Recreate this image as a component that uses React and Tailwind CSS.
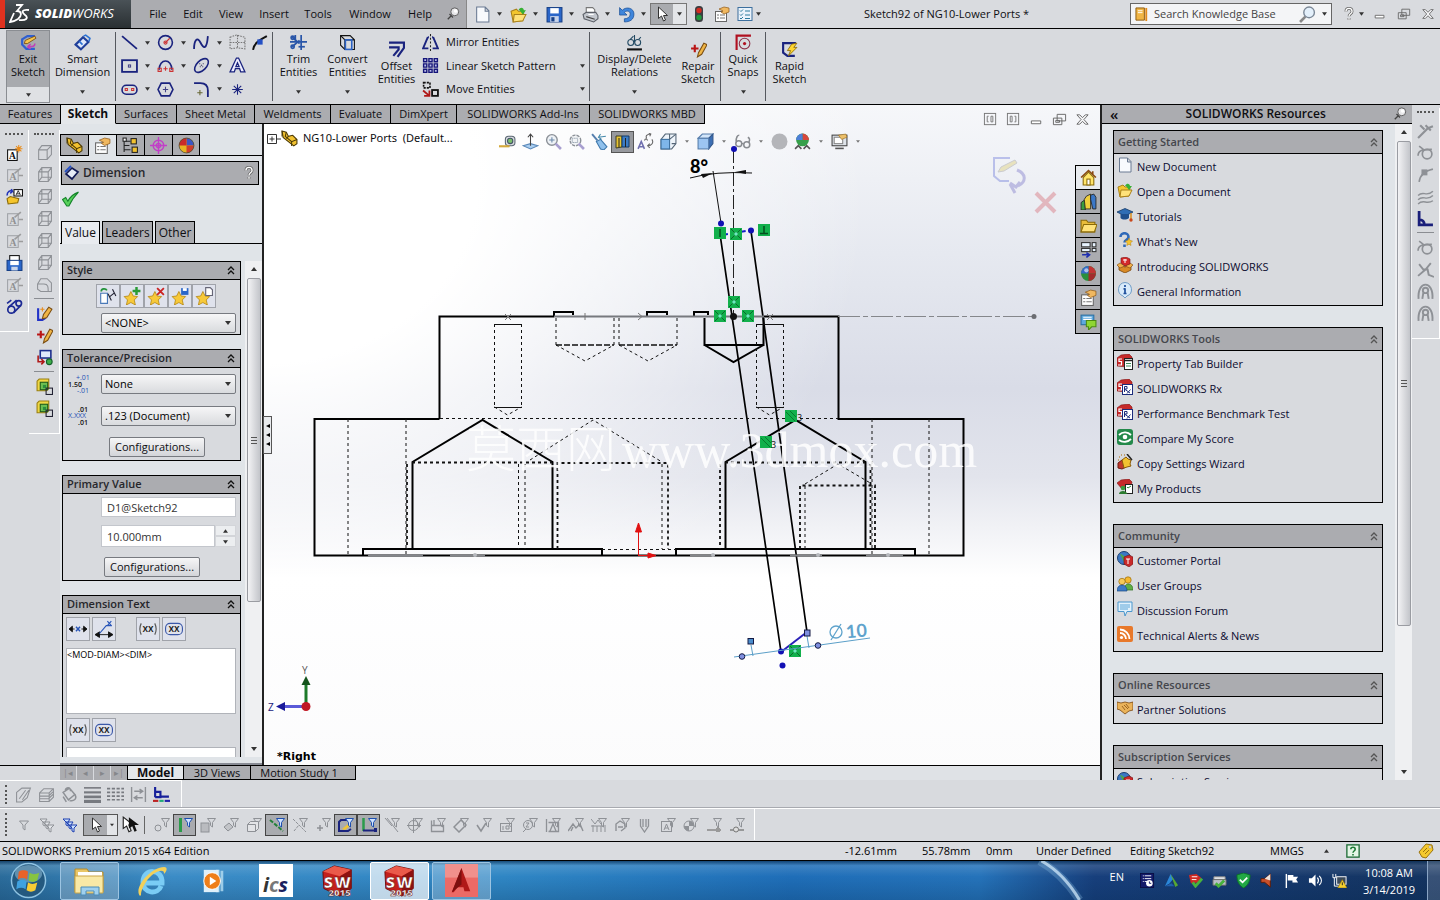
import React from 'react';

/* ---------- icon drawings, all on a 16 x 16 grid ---------- */
const G = '#8e9196';
const N = '#1a237e';
const funnel = (c, f = 'none') => <path d="M7.500 1.500h8l-3 4v4.500l-2-1.500v-3z" fill={f} stroke={c} />;
const cubeLines = (c) => <path d="M2.500 5.500h8v9h-8zM2.500 5.500l3-4h9v8.500l-4 4.500M10.500 5.500l4-4" fill="none" stroke={c} />;

const art = {
  pin: <g><circle cx="10" cy="5.500" r="4.500" fill="#e8e8ea" stroke="#555" /><circle cx="11" cy="4.500" r="2" fill="#fff" /><path d="M4 8l4 4M6 10l-4 4" stroke="#444" strokeWidth="1.500" /></g>,
  doc: <path d="M2.500 1h8l3.500 3.500V15h-11.500zM10.500 1v4H14" fill="#f8fafd" stroke="#6b7b93" />,
  open: <g><path d="M1 5l5-2 2 2h5l-1 9-9 1z" fill="#f3c62e" stroke="#a9801b" /><path d="M4 8h11l-3 6-9 1z" fill="#ffe27a" stroke="#a9801b" /><path d="M8 4c2-4 5-2 5 0h2l-3 4-3-4h2" fill="#37b134" /></g>,
  save: <g><rect x="1" y="1.500" width="14" height="13.500" fill="#2a66c9" stroke="#163f86" /><rect x="4" y="2" width="8" height="5" fill="#fff" /><rect x="4" y="9.500" width="8" height="5.500" fill="#c8d4ea" /><rect x="5" y="10.500" width="3" height="4" fill="#163f86" /></g>,
  print: <g><path d="M4 6V1.500h6l2 2V7" fill="#fff" stroke="#777" /><path d="M1 8l3-2h9l2 3v3l-4 3-9-3z" fill="#c3c7ce" stroke="#5c6068" /><path d="M4 10l8 2.500" stroke="#444" /><path d="M6 8h5" stroke="#fff" /></g>,
  undo: <path d="M1.500 1.500v7h7L6 6c2-2 5.500-1.500 5.500 1.500S9 12 6 12v3c5 0 9-2 9-7.500S8 0 4 4z" fill="#3f86dc" stroke="#1d4f96" strokeWidth=".7" />,
  cursor: <path d="M4.500 1v11.500l3-2.500 2 5 2-1-2-4.500h4z" fill="#fff" stroke="#333" />,
  light: <g><rect x="4" y="0" width="8" height="16" rx="3.500" fill="#3c3f42" /><circle cx="8" cy="4.500" r="2.700" fill="#d42b20" /><circle cx="8" cy="11.500" r="2.700" fill="#1f9b3d" /></g>,
  props: <g><rect x="1.500" y="5.500" width="11" height="10" fill="#fdfdfd" stroke="#666" /><path d="M3 9h2m1 0h5M3 12h2m1 0h5" stroke="#777" /><path d="M5 3l5-2 5 1v4l-5 2-3-2 2-1z" fill="#f0b860" stroke="#8f5a1a" strokeWidth=".7" /></g>,
  list: <g><rect x="1" y="1.500" width="14" height="13" fill="#eaf3fb" stroke="#3c6f9e" /><path d="M3 4.500l1 1 2-2M3 8.500l1 1 2-2M3 12l1 1 2-2M8 5h5M8 9h5M8 12.500h5" fill="none" stroke="#2b7a9e" /></g>,
  help: <g fill="none"><path d="M4.500 5c0-4.500 7-4.500 7 0 0 3-3.500 2.500-3.500 5.500M8 12.500v2" stroke="#666" strokeWidth="3.200" /><path d="M4.500 5c0-4.500 7-4.500 7 0 0 3-3.500 2.500-3.500 5.500M8 12.500v2" stroke="#fff" strokeWidth="1.500" /></g>,
  min: <path d="M2.500 9.500h10v3h-10z" fill="#fff" stroke="#666" />,
  restore: <path d="M5.500 2.500h9v7h-9zM1.500 6.500h9v7h-9zM4 9h4v2H4z" fill="none" stroke="#666" />,
  close: <path d="M2 3h3l3 3 3-3h3l-4.500 5 4.500 5h-3L8 10l-3 3H2l4.500-5z" fill="#f4f4f6" stroke="#666" />,
  exitSketch: <g><path d="M14 2H7L2 5v5l4 4h8" fill="none" stroke="#2f5fd0" strokeWidth="2" /><path d="M4 9l1-3 9-4 1 2-8 5z" fill="#f4c64d" stroke="#7a4a10" strokeWidth=".8" /><path d="M8 12c4 0 6 0 6-3m-7 3l3-2.500m-3 2.500l3 2" fill="none" stroke="#c23fb8" strokeWidth="1.500" /></g>,
  smartDim: <g><path d="M1.500 10l7-7 5 4.500-7 7z" fill="#dfe8fb" stroke="#1f3f9a" strokeWidth="2" /><path d="M9 2l2-1 4 3-1 3M5 7l3 3" stroke="#2b72d4" fill="none" strokeWidth="1.500" /></g>,
  line: <path d="M1 2l14 12" stroke={N} strokeWidth="1.700" />,
  circle: <g fill="none"><circle cx="8" cy="8" r="6.500" stroke={N} strokeWidth="1.500" /><path d="M8 8l4-4M7 8h2" stroke="#c33" /><circle cx="8" cy="8" r="1.500" stroke="#c33" /></g>,
  spline: <path d="M1 14c0-8 3-12 6-6s6 7 7-6" fill="none" stroke={N} strokeWidth="1.700" />,
  gridPts: <path d="M1 3l6-2 8 2v11l-7-1-7 1zM1 8h14M8 1v12" fill="none" stroke="#777" strokeDasharray="1.500 1" />,
  tangent: <g><path d="M1 15c1-7 6-9 13-13" fill="none" stroke="#111" strokeWidth="1.800" /><rect x="5" y="5" width="5" height="5" fill="#2450c5" /></g>,
  rect: <g fill="none"><rect x="1" y="3" width="14" height="11" stroke={N} strokeWidth="1.700" /><rect x="7" y="7.500" width="2" height="2" stroke="#448" /></g>,
  arc: <g fill="none"><path d="M2 12c0-11 12-11 12 0" stroke={N} strokeWidth="1.500" /><path d="M6 11h4M8 9v4" stroke="#c33" /><path d="M1 10.500h3v3H1zM12 10.500h3v3h-3z" stroke="#c33" /></g>,
  ellipse: <g fill="none"><ellipse cx="8" cy="8" rx="8" ry="4.500" transform="rotate(-45 8 8)" stroke={N} strokeWidth="1.500" /><path d="M6 6l4 4M10 6l-4 4" stroke="#557" strokeDasharray="1 1" /></g>,
  textA: <path d="M1 14L7 1h2l6 13h-4l-1-3H6l-1 3zM8 5.500L6.500 9h3z" fill="#eef" stroke={N} strokeWidth="1.200" />,
  slot: <g fill="none"><rect x="1" y="4" width="14" height="8.500" rx="4" stroke={N} strokeWidth="1.500" /><path d="M4 7h2v2H4zM10 7h2v2h-2z" stroke="#c33" /></g>,
  polygon: <g fill="none"><path d="M4 2h8l3 6-3 6H4L1 8z" stroke={N} strokeWidth="1.500" /><path d="M5.500 8h5M8 5.500v5" stroke="#448" /></g>,
  fillet: <g fill="none"><path d="M1 2h6c5 0 7 2 7 7v6" stroke={N} strokeWidth="1.700" /><path d="M4 11h5M6.500 8.500v5" stroke="#663" /></g>,
  star: <path d="M8 3v10M3 8h10M4.500 4.500l7 7M11.500 4.500l-7 7" stroke={N} />,
  trim: <g stroke="#2855a8" fill="none" strokeWidth="1.600"><path d="M0 7.500h16M10.500 1v14M5 1v5" /><path d="M2 3l7 6M2 12l7-6" /><circle cx="2.500" cy="3.500" r="1.500" /><circle cx="2.500" cy="12" r="1.500" /><path d="M8 12h6" /></g>,
  convert: <g fill="none"><path d="M1.500 1.500h9l4 4v9h-9l-4-4zM5.500 5.500h9" stroke="#111" /><path d="M1.500 1.500l4 4v9" stroke="#111" /><rect x="6" y="5.500" width="6" height="9" stroke="#2b62c4" strokeWidth="1.500" /></g>,
  offset: <path d="M1 1.500h14v5L9 15M1 6h9v2l-5 6" fill="none" stroke={N} strokeWidth="2" />,
  mirror: <g fill="none"><path d="M5.500 3L1 13.500h5M10.500 3L15 13.500h-5M5.500 3h1M9.500 3h1" stroke={N} strokeWidth="1.800" /><path d="M8 0v16" stroke="#222" strokeDasharray="2 1.500" /></g>,
  pattern: <path d="M1.500 1.500h3v3h-3zM6.500 1.500h3v3h-3zM11.500 1.500h3v3h-3zM1.500 6.500h3v3h-3zM6.500 6.500h3v3h-3zM11.500 6.500h3v3h-3zM1.500 11.500h3v3h-3zM6.500 11.500h3v3h-3zM11.500 11.500h3v3h-3z" fill="#b9bbe8" stroke="#15157a" strokeWidth="1.300" />,
  move: <g fill="none"><rect x="1.500" y="1.500" width="6" height="5" stroke="#111" strokeDasharray="2 1" strokeWidth="1.500" /><rect x="9.500" y="8.500" width="5.500" height="5.500" stroke="#111" strokeWidth="1.700" /><path d="M1 9l6 5M7 9v5H2" stroke="#b01818" strokeWidth="1.700" /></g>,
  relations: <g fill="none" stroke="#234a63"><circle cx="4.500" cy="8" r="2.800" /><circle cx="11" cy="8" r="2.800" /><path d="M4 5l3-3M8 1v7M12 5l2-2" /><path d="M1 14.500h14" stroke="#111" strokeWidth="2" /></g>,
  repair: <g><path d="M1 7h7M4.500 3.500v7" stroke="#b91515" strokeWidth="2" /><path d="M7 15l1-4 5-9 3 1.500-5 9z" fill="#f0b545" stroke="#7a4d12" /></g>,
  snaps: <g fill="none"><path d="M1.500 15V1.500H15" stroke="#b01020" strokeWidth="2" /><circle cx="9" cy="9" r="5" stroke="#8d3148" /><circle cx="9" cy="9" r="1.500" fill="#b01020" /></g>,
  rapid: <g><path d="M14 2H2v9l4 3h7" fill="none" stroke={N} strokeWidth="2" /><path d="M10 3l5-1-3 4h3l-8 8 2-5H6z" fill="#ffd633" stroke="#8a6a08" strokeWidth=".8" /></g>,
  part: <g><path d="M1 1l4 1 2 4 4-1 4 4v4l-3 2-10-8z" fill="#f2c230" stroke="#4c3a05" /><path d="M1 1v5M5 2l-1 4 6 5 5-2M10 11v4M7 6l-2 2" fill="none" stroke="#4c3a05" /></g>,
  config: <g fill="none" stroke="#222"><path d="M2 2v12M2 4h6M2 12h6M7 8H2" /><rect x="8.500" y="1.500" width="5" height="5" fill="#f2c230" /><rect x="9.500" y="9.500" width="5" height="5" fill="#f2c230" /><rect x="1" y="1" width="3" height="3" fill="#fff" /></g>,
  target: <g fill="none" stroke="#c23fc8" strokeWidth="1.300"><circle cx="8" cy="8" r="5" /><circle cx="8" cy="8" r="2" /><path d="M8 0v16M0 8h16" /></g>,
  ball: <g><circle cx="8" cy="8" r="7" fill="#e6b422" /><path d="M8 8V1a7 7 0 0 1 7 7z" fill="#3b56c4" /><path d="M8 8H1a7 7 0 0 1 7-7z" fill="#c92a2a" /><path d="M8 8h7a7 7 0 0 1-7 7z" fill="#cf3d2c" /><circle cx="8" cy="8" r="7" fill="none" stroke="#443" strokeWidth=".7" /></g>,
  ball2: <g><circle cx="8" cy="8" r="7" fill="#2a8f3c" /><path d="M8 8V1a7 7 0 0 1 7 7z" fill="#c23434" /><path d="M8 8H1a7 7 0 0 1 7-7z" fill="#3668c8" /><path d="M8 8h7a7 7 0 0 1-7 7z" fill="#a32c2c" /><circle cx="6" cy="5" r="2" fill="#fff" opacity=".6" /></g>,
  dim: <g><path d="M2 9l6-6 6 4-6 7z" fill="#e6ecf8" stroke="#111a55" strokeWidth="1.700" /><path d="M1 7l6-6" stroke="#2450c5" strokeWidth="2" /></g>,
  check: <path d="M.500 9l3-2 2 3.500C8 6 11 3.500 15.500 2 12 5.500 9 10 6.500 15h-2z" fill="#58d15b" stroke="#14842a" />,
  noteNew: <g><rect x="1.500" y="5.500" width="9" height="10" fill="#fff" stroke="#111" /><text x="6" y="14" textAnchor="middle" fontSize="9" fontWeight="bold" fontFamily="Liberation Serif" fill="#111">A</text><path d="M12 1v7M8.500 4.500h7M9.500 2l5 5M14.500 2l-5 5" stroke="#e98d1c" /></g>,
  noteG: <g opacity=".75"><rect x="1.500" y="3.500" width="10" height="11" fill="none" stroke={G} /><text x="6.500" y="13" textAnchor="middle" fontSize="9" fontWeight="bold" fontFamily="Liberation Serif" fill="#777">A</text><path d="M8 7l6-5M12 9h4" stroke="#888" strokeWidth="1.500" /></g>,
  noteOpen: <g><path d="M1 7c0-4 3-5 5-4L5 1m1 2L4 5" fill="none" stroke="#2233b8" strokeWidth="1.500" /><path d="M1 10l3-2 8 2-1 4-9 1z" fill="#f5c52c" stroke="#8a6a08" /><rect x="7.500" y="1.500" width="8" height="6" fill="#fff" stroke="#111" /><path d="M9.500 6.500l2-4 2 4M10 5.500h3" stroke="#111" fill="none" strokeWidth=".8" /></g>,
  noteSave: <g><rect x="3.500" y="1.500" width="9" height="8" fill="#fff" stroke="#111" /><rect x="1" y="6" width="14" height="9.500" fill="#2a66c9" stroke="#163f86" /><rect x="4" y="6.500" width="8" height="4" fill="#fff" /><rect x="5" y="12" width="6" height="3.500" fill="#c8d4ea" /></g>,
  belt: <g fill="none" stroke="#1d2a94" strokeWidth="1.600"><circle cx="5" cy="11" r="3.300" /><circle cx="12" cy="5" r="2.600" /><path d="M2 9l8-7M7 14l7-7M1 5l4-3" /></g>,
  cubeG: cubeLines(G),
  cubeG2: <g fill="none" stroke={G}><path d="M2.500 5.500h9v9h-9zM5.500 1.500h9v9h-9zM2.500 5.500l3-4M11.500 5.500l3-4M2.500 14.500l3-4M11.500 14.500l3-4" /></g>,
  cubeR: <path d="M1.500 7.500l3-5h6l4 4v8h-10l-3-2zM1.500 7.500h6c4 0 4 3 4 7" fill="none" stroke={G} />,
  sketchNew: <g><path d="M2 3v11h4l3-2" fill="none" stroke="#2233c8" strokeWidth="2" /><path d="M6 13l1-4 5-7 3 2-5 8z" fill="#f0b545" stroke="#7a4d12" /><path d="M6 2v4M4 4h4" stroke="#e98d1c" /></g>,
  sketchLink: <g><rect x="4" y="1.500" width="10" height="7" fill="#dfe8fb" stroke="#1d2f8e" strokeWidth="1.500" /><path d="M2 6v6h5M5 9.500L7.500 12 5 14.500" fill="none" stroke="#b01818" strokeWidth="1.500" /><circle cx="12.500" cy="12" r="2.700" fill="#3fae4a" stroke="#14602a" /></g>,
  blocks: <g><path d="M1 3l2-2h9v9l-2 2H1z" fill="#f0d743" stroke="#9a7f10" /><rect x="4" y="4" width="7" height="7" fill="#6cc052" stroke="#1c5a1c" /><rect x="6.500" y="6.500" width="3" height="3" fill="#2a8f3c" /><rect x="9.500" y="9.500" width="6" height="6" fill="none" stroke="#223" /></g>,
  paint: <g><path d="M1.500 5.500h6v9h-6z" fill="#fff" stroke="#4a79b8" /><path d="M2 4c0-3 4-3 5-1" fill="none" stroke="#23933a" strokeWidth="1.500" /><path d="M8 6l3 6M12 2l3 6M9 9l5-4" stroke="#223" fill="none" /></g>,
  starAdd: <g><path d="M7 4l2 4 4 .5-3 3 1 4.500-4-2.200L3 16l1-4.500-3-3L5 8z" fill="#f7c93a" stroke="#b38410" strokeWidth=".7" /><path d="M12 0v7M8.500 3.500h7" stroke="#2a9b35" strokeWidth="2.200" /></g>,
  starDel: <g><path d="M7 4l2 4 4 .5-3 3 1 4.500-4-2.200L3 16l1-4.500-3-3L5 8z" fill="#f7c93a" stroke="#b38410" strokeWidth=".7" /><path d="M9 1l6 6M15 1L9 7" stroke="#c22" strokeWidth="1.600" /></g>,
  starSave: <g><path d="M7 4l2 4 4 .5-3 3 1 4.500-4-2.200L3 16l1-4.500-3-3L5 8z" fill="#f7c93a" stroke="#b38410" strokeWidth=".7" /><rect x="9" y="1" width="6.500" height="6" fill="#2a66c9" /><rect x="10.500" y="1" width="3.500" height="2.500" fill="#fff" /></g>,
  starDoc: <g><path d="M7 4l2 4 4 .5-3 3 1 4.500-4-2.200L3 16l1-4.500-3-3L5 8z" fill="#f7c93a" stroke="#b38410" strokeWidth=".7" /><path d="M9.500.500h4l2 2v5h-6z" fill="#fff" stroke="#667" /></g>,
  dimC: <g><path d="M0 8l3-2.500v5zM16 8l-3-2.500v5zM1 8h4M11 8h4" fill="#111" stroke="#111" strokeWidth=".8" /><path d="M6.200 6l3.600 4M9.800 6l-3.600 4" stroke="#2855b8" strokeWidth="1.300" /></g>,
  dimL: <g><path d="M0 13l4-2.500v5zM16 13l-4-2.500v5zM1 13h14" fill="#111" stroke="#111" strokeWidth=".8" /><path d="M4 12l6-7h5M11 1l3.500 4M14.500 1L11 5" stroke="#2855b8" fill="none" /></g>,
  paren: <g><text x="8" y="11" textAnchor="middle" fontSize="9" fontWeight="600" fontFamily="Open Sans" fill="#222">xx</text><path d="M2 3c-1.500 3-1.500 7 0 10M14 3c1.500 3 1.500 7 0 10" fill="none" stroke="#555" /></g>,
  oval: <g><text x="8" y="11" textAnchor="middle" fontSize="9" fontWeight="600" fontFamily="Open Sans" fill="#222">xx</text><rect x=".5" y="3" width="15" height="10" rx="4" fill="none" stroke="#3b58a8" /></g>,
  tape: <g><rect x="6" y="3" width="9" height="9" rx="3" fill="#d8dce0" stroke="#5b6672" /><circle cx="10.500" cy="7.500" r="2.500" fill="#7cc06c" stroke="#456" /><path d="M0 12.500h10" stroke="#d4a93c" strokeWidth="2" /></g>,
  normalTo: <g><path d="M1 12l7-2 7 2-7 3z" fill="#a9cdf0" stroke="#5a88b8" /><path d="M8 12V1M5.500 4L8 1l2.500 3" fill="none" stroke="#444" /></g>,
  zoomFit: <g fill="none"><circle cx="6.500" cy="6.500" r="5" stroke="#8b9097" strokeWidth="1.300" fill="#eef2f6" /><path d="M4 6.500h5M6.500 4v5" stroke="#6a87a8" /><path d="M10 10l5 5" stroke="#a89fd0" strokeWidth="2.500" /></g>,
  zoomArea: <g fill="none"><circle cx="7" cy="7" r="5" stroke="#8b9097" strokeWidth="1.300" strokeDasharray="3 1" fill="#f2f4f6" /><path d="M4 5h5v4H4z" stroke="#789" strokeDasharray="1 1" /><path d="M10 10l5 5" stroke="#a89fd0" strokeWidth="2.500" /></g>,
  prevView: <g><path d="M1 1l5 6" stroke="#557fae" strokeWidth="1.800" /><path d="M5 8l4-2 6 7-3 3-3-1z" fill="#8fc0ec" stroke="#3f78ad" /><path d="M7 4l7-1M9 1L7 4l3 2" stroke="#4488aa" fill="none" /></g>,
  section: <g><path d="M1 2h6v11l-6 1z" fill="#e8c533" stroke="#3c3c22" /><path d="M7 2h7v11H7z" fill="#3c7cc4" stroke="#123a66" /><path d="M4 4v9M10.500 4v9" stroke="#222" /></g>,
  annot: <g fill="none" stroke="#666"><path d="M1 15l3-7 3 7M2 13h4" stroke="#6f6fae" strokeWidth="1.500" /><path d="M13 1c-4 0-5 2-4 4M11 0l2 1-1 2M14 6c2 3 0 6-4 6M12 10l-2 2 2 2M7 7c1-2 2-2 3 0" /></g>,
  viewOri: <g><path d="M5 1h10v9l-4 5H1V6z" fill="#eef4fa" stroke="#567" /><rect x="1" y="6" width="8" height="9" fill="#7fb6ea" stroke="#3b6f9f" /><path d="M9 6l6-5M9 1v5M11 10h4" stroke="#567" /></g>,
  dispStyle: <g><path d="M5 1h10l-4 4H1z" fill="#d3e6fa" stroke="#567dab" /><path d="M11 5l4-4v9l-4 5z" fill="#3c6fb4" stroke="#34588b" /><rect x="1" y="5" width="10" height="10" fill="#9cc5f2" stroke="#567dab" /></g>,
  glasses: <g fill="none" stroke="#888b90" strokeWidth="1.400"><circle cx="4.500" cy="10" r="2.800" /><circle cx="12" cy="11" r="2.800" /><path d="M2 8c0-5 2-6 3-6M7 10h2M14 9c1-3 1-4-1-5" /></g>,
  grayBall: <circle cx="8" cy="8" r="7.500" fill="#b4b5b9" />,
  scene: <g><circle cx="8" cy="6.500" r="6" fill="#35a04a" /><path d="M8 6.500v-6a6 6 0 0 1 6 6z" fill="#d8473c" /><path d="M8 6.500H2a6 6 0 0 1 6-6z" fill="#4d7fd8" /><path d="M1 15l3-3 3 3M9 15l3-3 3 3" stroke="#555" fill="none" strokeWidth="1.500" /></g>,
  monitor: <g><rect x="1" y="2" width="14" height="10" fill="#dfe4ea" stroke="#444" /><rect x="3" y="4" width="8" height="6" fill="#fff" stroke="#888" /><path d="M7 2l7-1 1 3-5 2z" fill="#ecc06a" stroke="#9a6c1f" strokeWidth=".6" /><path d="M4 14.500h8" stroke="#555" strokeWidth="1.500" /></g>,
  winL: <g fill="none" stroke="#777"><rect x="1.500" y="1.500" width="12" height="12" /><path d="M6 4.500H4.500v6H6M8.500 4.500h2v6h-2z" /></g>,
  winR: <g fill="none" stroke="#777"><rect x="1.500" y="1.500" width="12" height="12" /><path d="M9 4.500h1.500v6H9M4.500 4.500h2v6h-2z" /></g>,
  home: <g><path d="M1 8l7-6.500L15 8M12 2v3" fill="none" stroke="#8a4a12" strokeWidth="1.500" /><path d="M3 8l5-5 5 5v7H3z" fill="#ffe56b" stroke="#8a6a08" /><rect x="6.500" y="9.500" width="3" height="5.500" fill="#fff" stroke="#8a6a08" /></g>,
  library: <g stroke="#222" strokeWidth=".8"><path d="M1 9l4-3v10H1z" fill="#3a9c3e" /><path d="M4 6l2-3 4-2v14H5z" fill="#f0cf3c" /><path d="M10 2l3-1 2 3v11h-3l-2-9z" fill="#3c78c8" /></g>,
  folder: <g stroke="#8a6a08"><path d="M1 3h5l1.500 2H14v9H1z" fill="#e9bc3a" /><path d="M3.500 7H16l-2.500 7H1z" fill="#ffe27a" /></g>,
  palette: <g fill="#e8f4ff" stroke="#333"><rect x="1.500" y="1.500" width="8" height="4" /><rect x="11.500" y="1.500" width="3.500" height="4" /><rect x="1.500" y="7" width="8" height="3" /><rect x="11.500" y="7" width="3.500" height="3" /><path d="M2 13h6M6 11l3 2-3 2.500" stroke="#1f2fb0" strokeWidth="1.500" fill="none" /></g>,
  forum: <g><rect x="1" y="2" width="12" height="9" fill="#5ea9de" stroke="#2b6fa3" /><path d="M3 4h8M3 6h8" stroke="#fff" /><path d="M6 7h9v6h-4l-3 3v-3H6z" fill="#8fd631" stroke="#4c8a12" /></g>,
  tutorials: <g><path d="M0 5l8-3.500L16 5 8 9z" fill="#2f6db5" stroke="#153a66" strokeWidth=".8" /><path d="M3.500 7v4c2 2 6 2 8.500 0V7" fill="#1f4f8d" /><path d="M14 6v6" stroke="#d98c1c" strokeWidth="1.500" /><circle cx="14" cy="13" r="1.700" fill="#c8471b" /></g>,
  whatsNew: <g><path d="M3.500 5c0-5 8-5 8 0 0 3-4 2.500-4 5.500M7.500 12.500v2.500" fill="none" stroke="#2f69b8" strokeWidth="2.600" /><path d="M12 6l1 2.500 2.500.5-2 2 .5 2.500-2-1.300-2.200 1.300.5-2.500-2-2 2.700-.5z" fill="#f6c52e" stroke="#b07c10" strokeWidth=".5" /></g>,
  box: <g><path d="M2 8l6 2 6-2v5l-6 3-6-3z" fill="#d88a26" stroke="#7a450c" strokeWidth=".8" /><path d="M0 8l3-2 5 3 5-3 3 2-3 3-5-2-5 2z" fill="#f0b04a" stroke="#7a450c" strokeWidth=".6" /><path d="M4 1l5-1 4 2v5L8 9 4 6z" fill="#d42a2a" stroke="#7a1212" strokeWidth=".6" /><path d="M6 3h4M8 2v4" stroke="#fff" /></g>,
  info: <g><path d="M8 .500a7 7 0 0 1 2 13.500l-2 2-2-2a7 7 0 0 1 2-13.500z" fill="#d8eafa" stroke="#6f9cc6" /><path d="M8 6.500v5M8 3v2M6.500 11.500h3M6.500 6.800h2" stroke="#1e4f9c" strokeWidth="1.700" /></g>,
  swTab: <g><path d="M0 4l4-3 8-1 3 3v4l-5 6-10-1z" fill="#c62a2a" stroke="#7d1212" strokeWidth=".6" /><path d="M5 5H2v2.500h2.500V11H1" fill="none" stroke="#fff" strokeWidth="1.200" /><rect x="7.500" y="4.500" width="8" height="11" fill="#fff" stroke="#222" /><path d="M8 6.500h7" stroke="#222" strokeWidth="1.500" /><path d="M9 9.500h5M9 12h5" stroke="#3a8d5a" /></g>,
  swRx: <g><path d="M0 4l4-3 8-1 3 3v4l-5 6-10-1z" fill="#c62a2a" stroke="#7d1212" strokeWidth=".6" /><path d="M5 5H2v2.500h2.500V11H1" fill="none" stroke="#fff" strokeWidth="1.200" /><rect x="5.500" y="5.500" width="10" height="10" fill="#fff" stroke="#1c2c7c" /><path d="M7.500 13V7.500h2.500v2.500H7.500l5.500 4M13.500 10.500l-3.500 4" fill="none" stroke="#1c2c7c" /></g>,
  score: <g><rect width="16" height="16" rx="3" fill="#23894a" /><path d="M2 6c4-4 9-3 12 0M2 11c4 3 9 2 12-1" fill="none" stroke="#fff" strokeWidth="1.800" /><circle cx="8" cy="8" r="2.300" fill="#fff" /></g>,
  wizard: <g><path d="M1 9l4-3 4 2v5l-4 2-4-1z" fill="#c0392b" stroke="#6d1b12" /><path d="M5 6l4-3 2 2 3 1-1 4 1 2-4 1-3 1-1-4z" fill="#f2c230" stroke="#8a5a08" /><path d="M10 0l5 6" stroke="#222" strokeWidth="1.500" /><path d="M2 3h1M4 1h1M7 1h1M1 6h1" stroke="#a60" /></g>,
  products: <g><path d="M0 4l4-3 8-1 3 3-1 4-9 3z" fill="#c62a2a" stroke="#7d1212" strokeWidth=".6" /><rect x="8.500" y="5.500" width="7" height="9" fill="#fff" stroke="#222" /><path d="M10 8l1 1 3-2" stroke="#2a8b3a" fill="none" /><circle cx="6" cy="9" r="2.300" fill="#3a9c3e" /><path d="M2 15c0-4 8-4 8 0z" fill="#2c7c30" /></g>,
  portal: <g><circle cx="7" cy="7" r="6.500" fill="#3b78c4" stroke="#1c3f70" /><path d="M3 3c3 0 3 3 6 2s1 5-2 6z" fill="#4ca651" /><path d="M7 6l5-2 4 2v7l-4 3-5-3z" fill="#c92a2a" stroke="#701010" strokeWidth=".6" /><path d="M9 8h4M11 8v5" stroke="#fff" /></g>,
  users: <g strokeWidth=".7"><circle cx="11" cy="4" r="3.200" fill="#f5b92e" stroke="#9a6b0c" /><path d="M7 14c0-8 9-8 9 0z" fill="#5fae45" stroke="#2c6d1c" /><circle cx="5" cy="5.500" r="3.200" fill="#f5c95a" stroke="#9a6b0c" /><path d="M0 15c0-8 10-8 10 0z" fill="#3c7ac8" stroke="#1b477f" /></g>,
  discuss: <g><path d="M1 1h14v9.500h-5L8 15l-1-4.500H1z" fill="#e1f1fc" stroke="#4b97cd" /><path d="M3 4h10M3 6h10M3 8h8" stroke="#5fa7d8" /></g>,
  rss: <g><rect width="16" height="16" rx="2" fill="#e8782a" /><circle cx="4.500" cy="11.500" r="1.600" fill="#fff" /><path d="M3 7a6 6 0 0 1 6 6M3 3.500A9.500 9.500 0 0 1 12.500 13" fill="none" stroke="#fff" strokeWidth="1.800" /></g>,
  hands: <g><path d="M0 2l4 1 4-1 4 1 4-1v8l-4 1-4 3-5-4-3-1z" fill="#eab35a" stroke="#7a450c" strokeWidth=".8" /><path d="M5 6l3 4M7 5l4 4M9 4l3 4" stroke="#7a450c" strokeWidth=".7" /></g>,
  gCurve1: <path d="M1 15l9-9 5-2M8 3l5 5M3 3l4 4" fill="none" stroke={G} strokeWidth="2" />,
  gCurve2: <g fill="none" stroke={G} strokeWidth="1.600"><circle cx="9.500" cy="9.500" r="4.500" /><path d="M1 11c0-5 4-6 13-6M2 2l4 3" /></g>,
  gCurve3: <g fill="none" stroke={G} strokeWidth="1.600"><path d="M2 15C3 8 7 5 15 3" /><rect x="5" y="4" width="4" height="4" fill={G} /></g>,
  gCurve4: <path d="M1 7c5-5 8 2 14-4M1 11c5-5 8 2 14-4M1 15c5-5 8 1 14-3" fill="none" stroke={G} strokeWidth="1.300" />,
  corner: <path d="M2 1v13h13M2 9c3 0 5 2 5 5" fill="none" stroke="#1a1f7a" strokeWidth="2.600" />,
  gCurve5: <g fill="none" stroke={G} strokeWidth="1.800"><path d="M1 14l7-6 5-6M2 3l4 5 4 0 1 5 5 2" /></g>,
  gArch: <g fill="none" stroke={G} strokeWidth="1.800"><path d="M1.500 15C0-3 16-3 14.500 15M5 15l1-6M11 15l-1-6" /><circle cx="8" cy="7" r="2.500" /></g>,
  gSheets: <path d="M1.500 6l5-4h8l-3 9-5 4h-5zM4 12l6-8M7 13l6-9" fill="none" stroke={G} />,
  gLayers: <path d="M1.500 6.500h9v8h-9zM1.500 6.500l4-4h9v8l-4 4M10.500 6.500l4-4M2 9.500h8l4-4M2 12h8l4-4" fill="none" stroke={G} />,
  gBucket: <g fill="none" stroke={G} strokeWidth="1.400"><path d="M2 6l6-4 5 6-6 5zM4 5c0-4 5-5 5 0" /><path d="M13 8c2 3 1 6-5 6M2 10l3 5" /></g>,
  gBars: <g fill="#777a80"><rect y="1" width="16" height="1.500" /><rect y="5" width="16" height="2" /><rect y="9" width="16" height="2.500" /><rect y="13" width="16" height="3" /></g>,
  gDashes: <path d="M0 2.500h16M0 6h16M0 9.500h16M0 13h16" stroke="#777a80" strokeWidth="1.500" strokeDasharray="3 1.500" />,
  gSwap: <path d="M1.500 1v14M14.500 1v14M4 5h8M9 3l3 2-3 2M12 11H4M7 9l-3 2 3 2" fill="none" stroke={G} strokeWidth="1.300" />,
  baseline: <g><path d="M2 1v9.500M2 5.500h5v5H2M8 10h7" fill="none" stroke="#17209a" strokeWidth="2" /><path d="M0 14h5" stroke="#bb2222" strokeWidth="2" /><path d="M6 14h4" stroke="#22aa77" strokeWidth="2" /><path d="M11 14h5" stroke="#2222aa" strokeWidth="2" /></g>,
  fG: <path d="M3.500 4h9l-3.500 4v5l-2-1.500V8z" fill="none" stroke={G} />,
  fG3: <g fill="#e4e6ea" stroke={G}><path d="M1 2h7L6 5v4L4 8V5zM4 5h7L9 8v4l-2-1V8zM7 8h8l-3 3v4l-2-1v-3z" /></g>,
  fB3: <g fill="#cfe3ff" stroke="#1d3fb0"><path d="M1 2h7L6 5v4L4 8V5zM4 5h7L9 8v4l-2-1V8zM7 8h8l-3 3v4l-2-1v-3z" /></g>,
  cursors: <g><path d="M2 1v10l3-2 2 5 2-1-2-5h4z" fill="#fff" stroke="#222" /><path d="M7 1v10l3-2 2 5 2-1-2-5h4z" fill="#111" /></g>,
  t1: <g>{funnel(G)}<circle cx="4" cy="11" r="3" fill="none" stroke={G} /></g>,
  t2: <g>{funnel('#1d4fb0', '#cfe3ff')}<path d="M3.500 1v14" stroke="#2a9b4a" strokeWidth="3" /></g>,
  t3: <g>{funnel(G)}<rect x="1" y="6" width="8" height="9" fill="#b9bbbf" stroke={G} /></g>,
  t4: <g>{funnel(G)}<path d="M1 10l5-4 4 4-5 4z" fill="#c2c4c8" stroke={G} /></g>,
  t5: <g>{funnel(G)}<path d="M1.500 7.500l3-3h8v7l-3 3h-8zM1.500 7.500h8v7" fill="#e3e4e7" stroke={G} /></g>,
  t6: <g>{funnel('#1d4fb0', '#cfe3ff')}<path d="M1 3l13 11" stroke="#23803a" strokeWidth="2" strokeDasharray="4 1.500" /></g>,
  t7: <g>{funnel(G)}<path d="M1 2l13 13M2 14l5-6" stroke={G} fill="none" strokeDasharray="3 1" /></g>,
  t8: <g>{funnel(G)}<path d="M2 11h6M5 8v6" stroke={G} strokeWidth="1.500" /></g>,
  t9: <g><path d="M10 3H3L1 5v9h9l3-2" fill="none" stroke={N} strokeWidth="2" /><path d="M4 12l6-5 2 2-5 4z" fill="#f0c535" />{funnel('#1d4fb0', '#cfe3ff')}</g>,
  t10: <g>{funnel('#1d4fb0', '#cfe3ff')}<path d="M2.500 1v13" stroke="#2a9b4a" strokeWidth="2.500" /><path d="M2 13.500h13" stroke="#1a237e" strokeWidth="2" /><rect x="13" y="11" width="3" height="4" fill="#1a237e" /></g>,
  t11: <g>{funnel(G)}<path d="M1 1l7 8M3 1l11 14" stroke={G} /></g>,
  t12: <g>{funnel(G)}<circle cx="6.500" cy="8.500" r="5" fill="none" stroke={G} /><path d="M6.500 1v15M0 8.500h14" stroke={G} /></g>,
  t13: <g>{funnel(G)}<path d="M1.500 3.500v11h12v-6h-12M4 3v5" fill="none" stroke={G} strokeWidth="1.300" /></g>,
  t14: <g>{funnel(G)}<path d="M1 10l7-7 5 5-7 7z" fill="none" stroke={G} strokeWidth="1.500" /></g>,
  t15: <g>{funnel(G)}<path d="M1 8l4 6 5-8" fill="none" stroke={G} strokeWidth="1.500" /></g>,
  t16: <g>{funnel(G)}<rect x="1.500" y="6.500" width="11" height="8" fill="none" stroke={G} /><path d="M4 9v4M7 9h3v3H7z" stroke={G} fill="none" /></g>,
  t17: <g>{funnel(G)}<circle cx="6" cy="8" r="4.500" fill="none" stroke={G} /><path d="M4 6h3l-3 4h3M1 15l3-3" stroke={G} fill="none" /></g>,
  t18: <g>{funnel(G)}<path d="M1.500 2v13M3.500 5.500h10v9h-10M5 14l3-7 3 7" stroke={G} fill="none" strokeWidth="1.300" /></g>,
  t19: <g>{funnel(G)}<path d="M0 14l5-7 3 4 4-4 3 7M3 14l2-4" stroke={G} fill="none" strokeWidth="1.400" /></g>,
  t20: <g>{funnel(G)}<path d="M0 2l4 5 3-4 3 4M2 15V8M6 15V9M10 15V9M14 15v-5M0 9h15" stroke={G} fill="none" /></g>,
  t21: <g>{funnel(G)}<path d="M2 14V7l4-3 5 3v4l-4 3M4 10h5" stroke={G} fill="none" strokeWidth="1.400" /></g>,
  t22: <g><path d="M3.500 2v7l4 6 4-6V2M6 2v8M9 2v8" stroke={G} fill="none" strokeWidth="1.300" /></g>,
  t23: <g>{funnel(G)}<rect x="1.500" y="4.500" width="10" height="10" fill="none" stroke={G} /><path d="M4 13l2.500-6L9 13M5 11h3" stroke={G} fill="none" /></g>,
  t24: <g>{funnel(G)}<circle cx="6" cy="9" r="5" fill="none" stroke={G} /><path d="M6 4v5H1a5 5 0 0 0 5 5V9h5a5 5 0 0 0-5-5z" fill={G} /></g>,
  t25: <g>{funnel(G)}<path d="M1 13h14M12 10v3" stroke="#888" strokeWidth="1.600" /><rect x="10" y="11" width="4" height="4" fill="#999" /></g>,
  t26: <g>{funnel(G)}<path d="M1 13h14" stroke="#888" strokeWidth="1.600" /><circle cx="7" cy="12.500" r="2.500" fill="#ddd" stroke="#777" /></g>,
  statusHelp: <g><rect x="1" y="1" width="14" height="14" fill="#e4f6e6" stroke="#1d6b35" strokeWidth="1.500" /><path d="M5.500 6c0-3 5-3 5 0 0 2-2.500 2-2.500 4M8 11.500v1.500" fill="none" stroke="#1d7a35" strokeWidth="1.800" /></g>,
  tag: <g><path d="M1 9l7-8 6 1 1 5-7 8-4-1z" fill="#f5c92e" stroke="#9a7410" /><path d="M5 9l4-4M7 11l4-4" stroke="#9a7410" /><circle cx="12" cy="4" r="1.200" fill="#fff" stroke="#777" strokeWidth=".5" /></g>,
  search: <g><path d="M1 15l5-5" stroke="#888" strokeWidth="2.500" /><circle cx="9.500" cy="6" r="5" fill="#e4f0fb" stroke="#7a8796" strokeWidth="1.300" /></g>,
  book: <g><path d="M1 1h9v13H1z" fill="#f0b545" stroke="#8a5a10" /><path d="M12 1v14" stroke="#e08a1c" strokeWidth="2" /><path d="M3 4h5M3 6h5" stroke="#fff" /></g>,
  trayClock: <g><rect x=".5" y=".5" width="14" height="15" fill="#131a6a" stroke="#0a0f44" /><path d="M3 3h1m1 0h7M3 6h1m1 0h7M3 9h1m1 0h3" stroke="#fff" /><circle cx="10" cy="11" r="3.500" fill="#fff" /><path d="M10 9v2h2" stroke="#131a6a" fill="none" /></g>,
  trayA: <g><path d="M1 14L7 1l3 5-4 5z" fill="#2a86d8" /><path d="M7 1l8 12-3 2z" fill="#58a832" /><path d="M1 14h10l-3-3z" fill="#1f5fae" /></g>,
  trayPdf: <g><path d="M1 2l8-1 5 4-3 5-8 1z" fill="#cf2a24" /><path d="M4 4h6M4 7h5" stroke="#fff" /><path d="M5 10l3 4 7-8" stroke="#48b23c" strokeWidth="3" fill="none" /></g>,
  trayPrn: <g><path d="M2 4h12v6H2z" fill="#dfe2e6" stroke="#888" /><path d="M1 7h14v6H1z" fill="#b9bec6" stroke="#666" /><path d="M4 11l3 3 6-6" stroke="#48b23c" strokeWidth="3" fill="none" /></g>,
  shield: <g><path d="M8 0l7 2c0 7-2 11-7 14C3 13 1 9 1 2z" fill="#22a845" stroke="#0d7128" /><path d="M4 7l3 3 5-5" fill="none" stroke="#fff" strokeWidth="1.800" /></g>,
  horn: <g><path d="M1 6h4l6-5v14l-6-5H1z" fill="#c8502a" stroke="#5b1c0a" /><path d="M5 6l6-5v7z" fill="#efe3dc" /></g>,
  flag: <g><path d="M2.500 1v15" stroke="#fff" strokeWidth="1.500" /><path d="M4 2h6v2h5l-2 3 2 3H9V8H4z" fill="#fff" /></g>,
  speaker: <g><path d="M1 5.500h3l4-4v13l-4-4H1z" fill="#fff" /><path d="M10 5c1.500 2 1.500 4 0 6M12 3c3 3 3 7 0 10" stroke="#fff" fill="none" strokeWidth="1.300" /></g>,
  net: <g><rect x="5" y="4" width="10" height="8" fill="#3b4a5c" stroke="#fff" /><path d="M1 1v4h3V1M2.500 5v9H8" stroke="#fff" fill="none" /><path d="M11 7l5 9H6z" fill="#f4cf2f" stroke="#8a6a08" strokeWidth=".6" /><path d="M11 10v3" stroke="#222" /></g>,
};

const Ic = ({ n, c = 'size-4' }) => (
  <svg viewBox="0 0 16 16" className={`${c} shrink-0`} aria-hidden="true">{art[n]}</svg>
);
const Arr = ({ c = 'w-[5px]' }) => (
  <svg viewBox="0 0 6 4" className={`${c} h-[4px] shrink-0`} aria-hidden="true"><path d="M0 0h6L3 4z" fill="#333" /></svg>
);
const Chev = ({ color = '#111' }) => (
  <svg viewBox="0 0 8 9" className="h-[9px] w-2 shrink-0" aria-hidden="true"><path d="M1 4l3-3 3 3M1 8l3-3 3 3" fill="none" stroke={color} strokeWidth="1.300" /></svg>
);
const IconBtn = ({ n, label, w = 'w-[23px]', c = 'size-4', box = '' }) => (
  <button type="button" aria-label={label || n} className={`flex shrink-0 items-center justify-center ${w} ${box}`}><Ic n={n} c={c} /></button>
);

/* ---------- title bar ---------- */
const menus = [['File', 'w-[36px]'], ['Edit', 'w-[34px]'], ['View', 'w-[42px]'], ['Insert', 'w-[44px]'], ['Tools', 'w-[44px]'], ['Window', 'w-[60px]'], ['Help', 'w-[40px]']];
function TitleBar() {
  return (
    <header className="flex h-[29px] shrink-0 items-stretch border-b border-black bg-[#d9dbdf]">
      <div className="flex w-[131px] shrink-0 items-center gap-1 border-l-[5px] border-[#e0321f] bg-gradient-to-b from-[#4a5257] to-[#2a3033] pl-1">
        <svg viewBox="0 0 22 22" className="h-[22px] w-[22px] shrink-0" aria-hidden="true">
          <path d="M7 2h6l-5 6c5 0 5 5 1 8-3 2-6 3-8 3l4-9M20 7c-7-1-8 2-4 5s1 6-6 5" fill="none" stroke="#fff" strokeWidth="1.800" />
        </svg>
        <span className="text-[13px] italic text-white"><b className="font-extrabold">SOLID</b>WORKS</span>
      </div>
      <nav className="flex w-[336px] shrink-0 items-center border-r border-[#888] bg-[#abacb0] pl-[9px]">
        {menus.map(([m, w]) => <button key={m} type="button" className={`${w} shrink-0 text-center`}>{m}</button>)}
        <IconBtn n="pin" label="Pin menu" w="w-[26px]" c="size-[14px]" />
      </nav>
      <div className="flex shrink-0 items-center pl-[3px]">
        {['doc', 'open', 'save', 'print', 'undo'].map((n) => (
          <button key={n} type="button" aria-label={n} className="flex w-[36px] items-center justify-center gap-[6px]"><Ic n={n} c="size-[17px]" /><Arr /></button>
        ))}
        <button type="button" aria-label="Select" className="flex h-[22px] items-center border border-[#777] bg-[#e3e5e8]"><span className="flex h-full w-[22px] items-center justify-center bg-[#a9abaf]"><Ic n="cursor" /></span><span className="px-[4px]"><Arr /></span></button>
        <IconBtn n="light" label="Rebuild" />
        <IconBtn n="props" label="File properties" />
        <IconBtn n="list" label="Options" />
        <Arr />
      </div>
      <h1 className="flex min-w-0 flex-1 items-center justify-center truncate pl-[2px]">Sketch92 of NG10-Lower Ports *</h1>
      <label className="my-[3px] mr-[7px] flex w-[202px] shrink-0 items-center border border-[#666] bg-[#f4f5f7] px-1">
        <Ic n="book" c="size-[15px]" />
        <input aria-label="Search Knowledge Base" placeholder="Search Knowledge Base" className="ml-1 w-full min-w-0 bg-transparent text-[11px] outline-none placeholder:text-[#444]" />
        <Ic n="search" c="size-[17px]" />
        <span className="ml-[6px]"><Arr /></span>
      </label>
      <div className="flex shrink-0 items-center">
        <IconBtn n="help" label="Help" w="w-[20px]" c="size-[14px]" /><Arr />
        <IconBtn n="min" label="Minimize" w="ml-1 w-[24px]" c="size-[14px]" />
        <IconBtn n="restore" label="Restore" w="w-[24px]" c="size-[14px]" />
        <IconBtn n="close" label="Close" w="w-[24px]" c="size-[14px]" />
      </div>
    </header>
  );
}

/* ---------- ribbon ---------- */
const Big = ({ n, l1, l2, w, arrow, low }) => (
  <button type="button" className={`${w} relative flex shrink-0 flex-col items-center ${low ? 'pt-[12px]' : 'pt-[5px]'}`}>
    <Ic n={n} c="size-[17px]" />
    <span className="mt-[1px] whitespace-nowrap leading-[13px]">{l1}<br />{l2}</span>
    {arrow && <span className="absolute bottom-[10px]"><Arr /></span>}
  </button>
);
const Sep = () => <div className="my-[3px] w-px shrink-0 bg-[#55585e]" />;
const sketchTools = [
  ['line', 1, 'circle', 1, 'spline', 1, 'gridPts', 'tangent'],
  ['rect', 1, 'arc', 1, 'ellipse', 1, 'textA'],
  ['slot', 1, 'polygon', 0, 'fillet', 1, 'star'],
];
function Ribbon() {
  return (
    <div className="flex h-[76px] shrink-0 items-stretch border-b border-black bg-[#d8dade] text-center">
      <button type="button" className="my-[1px] ml-[6px] mr-[5px] flex w-[44px] shrink-0 flex-col border border-[#8a8d92]">
        <span className="flex w-full flex-col items-center bg-[#a8aaae] pb-[9px] pt-[3px]"><Ic n="exitSketch" c="size-[17px]" /><span className="mt-[1px] leading-[13px]">Exit<br />Sketch</span></span>
        <span className="flex w-full flex-1 items-center justify-center bg-[#dfe1e4]"><Arr /></span>
      </button>
      <Big n="smartDim" l1="Smart" l2="Dimension" w="w-[55px]" arrow />
      <div className="w-[5px]" /><Sep />
      <div className="flex w-[156px] shrink-0 flex-col justify-around pb-[3px] pl-[4px] pt-[2px]">
        {sketchTools.map((row, i) => (
          <div key={i} className="flex items-center">
            {row.map((t, j) => typeof t === 'string'
              ? <IconBtn key={j} n={t} w="w-[18px]" c="size-[17px]" box={j === 7 ? 'ml-[5px]' : ''} />
              : <span key={j} className="flex w-[18px] justify-center">{t ? <Arr /> : null}</span>)}
          </div>
        ))}
      </div>
      <Sep />
      <Big n="trim" l1="Trim" l2="Entities" w="ml-[1px] w-[49px]" arrow />
      <Big n="convert" l1="Convert" l2="Entities" w="w-[49px]" arrow />
      <Big n="offset" l1="Offset" l2="Entities" w="w-[49px]" low />
      <div className="flex w-[168px] shrink-0 flex-col justify-around pb-[3px] pt-[2px]">
        {[['mirror', 'Mirror Entities'], ['pattern', 'Linear Sketch Pattern', 1], ['move', 'Move Entities', 1]].map(([n, l, a]) => (
          <button key={n} type="button" className="flex items-center whitespace-nowrap pl-px pr-1 text-left"><Ic n={n} c="size-[17px]" /><span className="ml-[7px] flex-1">{l}</span>{a ? <Arr /> : null}</button>
        ))}
      </div>
      <Sep />
      <Big n="relations" l1="Display/Delete" l2="Relations" w="ml-[3px] w-[83px]" arrow />
      <Big n="repair" l1="Repair" l2="Sketch" w="w-[44px]" low />
      <Sep />
      <Big n="snaps" l1="Quick" l2="Snaps" w="w-[44px]" arrow />
      <Sep />
      <Big n="rapid" l1="Rapid" l2="Sketch" w="w-[47px]" low />
    </div>
  );
}

const cmdTabs = [['Features', 'w-[61px]'], ['Sketch', 'w-[55px]'], ['Surfaces', 'w-[61px]'], ['Sheet Metal', 'w-[78px]'], ['Weldments', 'w-[76px]'], ['Evaluate', 'w-[60px]'], ['DimXpert', 'w-[66px]'], ['SOLIDWORKS Add-Ins', 'w-[133px]'], ['SOLIDWORKS MBD', 'w-[115px]']];

/* ---------- tool strips ---------- */
const Dots = () => <div className="mx-[5px] h-[2px] border-t-2 border-dotted border-[#555]" />;
const strip1 = ['noteNew', 'noteG', 'noteOpen', 'noteG', 'noteG', 'noteSave', 'noteG', 'belt'];
const strip2 = ['cubeG', 'cubeG2', 'cubeG2', 'cubeG2', 'cubeG2', 'cubeG2', 'cubeR', '-', 'sketchNew', 'repair', 'sketchLink', '-', 'blocks', 'blocks'];
const Strip = ({ items, c }) => (
  <div className={`flex flex-col self-start border-b border-r border-white pt-[3px] ${c}`}>
    <Dots />
    <div className="mt-[6px] flex flex-col pb-[14px]">
      {items.map((n, i) => n === '-'
        ? <div key={i} className="mx-[5px] my-[3px] h-px bg-[#8a8d92]" />
        : <IconBtn key={i} n={n} w="w-full" box="h-[22px]" c="size-[17px]" />)}
    </div>
  </div>
);

/* ---------- property panel ---------- */
const Group = ({ title, children, c = '' }) => (
  <section className={`shrink-0 border border-black bg-[#d8dade] ${c}`}>
    <h3 className="flex h-[18px] items-center justify-between border-b border-black bg-[#abacb0] px-[4px] font-semibold text-[#26262b]"><span>{title}</span><span className="pr-px"><Chev /></span></h3>
    {children}
  </section>
);
const Drop = ({ label, value }) => (
  <div className="relative w-[135px] shrink-0">
    <select aria-label={label} className="block h-[20px] w-full appearance-none rounded-[2px] border border-[#777a80] bg-gradient-to-b from-[#f6f6f7] to-[#d9dbde] pl-[3px] pr-5 text-[11px] leading-[16px] text-black"><option>{value}</option></select>
    <span className="pointer-events-none absolute right-[4px] top-0 flex h-full items-center"><Arr c="w-[8px]" /></span>
  </div>
);
const Btn = ({ children }) => <button type="button" className="h-5 w-[96px] whitespace-nowrap rounded-[2px] border border-[#777a80] bg-gradient-to-b from-[#f6f6f7] to-[#d3d5d9] text-center">{children}</button>;
const Sq = ({ n }) => <button type="button" aria-label={n} className="flex size-6 items-center justify-center border border-[#a0a3aa] bg-[#dfe2ec]"><Ic n={n} c="size-[18px]" /></button>;

const ScrollBar = ({ thumb }) => (
  <div className="flex w-[17px] shrink-0 flex-col items-center bg-[#eff0f2]" aria-hidden="true">
    <span className="flex h-[17px] rotate-180 items-center"><Arr c="w-[6px]" /></span>
    <div className={`${thumb} flex w-[14px] items-center justify-center rounded-[2px] border border-[#9a9ca2] bg-gradient-to-r from-[#f3f3f5] to-[#c3c5ca]`}><span className="h-[7px] w-[6px] border-y border-[#555]"><span className="mt-[2px] block h-px bg-[#555]" /></span></div>
    <span className="mb-[6px] mt-auto"><Arr c="w-[6px]" /></span>
  </div>
);

function PropertyPanel() {
  return (
    <aside className="flex w-[204px] shrink-0 flex-col border-r-2 border-[#222] bg-[#e0e4e8]">
      <div className="mt-[10px] flex h-[22px] shrink-0 border-b border-black">
        {['part', 'props', 'config', 'target', 'ball'].map((n, i) => (
          <button key={n} type="button" aria-label={n} className={`flex w-7 items-center justify-center border-l border-t border-black last:border-r ${i === 1 ? '-mb-px bg-[#e0e4e8]' : 'bg-[#abacb0]'}`}><Ic n={n} c="size-[17px]" /></button>
        ))}
      </div>
      <h2 className="ml-px mr-[3px] mt-[5px] flex h-[24px] shrink-0 items-center border border-black bg-[#abacb0] px-[2px] text-[12px] font-semibold text-[#26262b]">
        <Ic n="dim" c="size-[16px]" /><span className="ml-[3px] flex-1">Dimension</span><Ic n="help" c="size-[14px]" />
      </h2>
      <button type="button" aria-label="OK" className="ml-[2px] mt-[5px] w-[18px] shrink-0"><Ic n="check" c="size-[17px]" /></button>
      <div role="tablist" className="mt-[14px] flex h-[23px] shrink-0 items-stretch gap-[2px] border-b border-black pl-px text-[12px]">
        <button type="button" role="tab" aria-selected="true" className="-mb-px w-[39px] border border-b-0 border-black bg-[#e8ebef]">Value</button>
        <button type="button" role="tab" className="w-[51px] border border-b-0 border-black bg-[#abacb0]">Leaders</button>
        <button type="button" role="tab" className="w-[40px] border border-b-0 border-black bg-[#abacb0]">Other</button>
      </div>
      <div className="mt-[17px] flex min-h-0 flex-1">
        <div className="flex min-w-0 flex-1 flex-col gap-[14px] overflow-hidden pl-[2px] pr-[4px]">
          <Group title="Style">
            <div className="ml-[33px] mt-[4px] flex">{['paint', 'starAdd', 'starDel', 'starSave', 'starDoc'].map((n) => <Sq key={n} n={n} />)}</div>
            <div className="mb-[1px] mr-[4px] mt-[5px] flex justify-end"><Drop label="Style" value="<NONE>" /></div>
          </Group>
          <Group title="Tolerance/Precision">
            <div className="mt-[5px] flex items-center justify-between pl-[5px] pr-[4px]">
              <svg viewBox="0 0 26 22" className="h-[22px] w-[26px]" fontFamily="Open Sans" fontSize="7" aria-hidden="true"><text x="8" y="7" fill="#2450b5">+.01</text><text x="0" y="14" fill="#111" fontWeight="600">1.50</text><text x="9" y="20" fill="#2450b5">-.01</text></svg>
              <Drop label="Tolerance type" value="None" />
            </div>
            <div className="mt-[10px] flex items-center justify-between pl-[5px] pr-[4px]">
              <svg viewBox="0 0 26 22" className="h-[22px] w-[26px]" fontFamily="Open Sans" fontSize="7" aria-hidden="true"><text x="10" y="7" fill="#111" fontWeight="600">.01</text><text x="0" y="13" fill="#2450b5">X.XXX</text><text x="10" y="20" fill="#111" fontWeight="600">.01</text></svg>
              <Drop label="Unit precision" value=".123 (Document)" />
            </div>
            <div className="mb-[3px] ml-[46px] mt-[10px]"><Btn>Configurations...</Btn></div>
          </Group>
          <Group title="Primary Value">
            <div className="ml-[38px] mr-[4px] mt-[3px]"><input aria-label="Dimension name" defaultValue="D1@Sketch92" className="block h-[20px] w-full border border-[#c3c6cc] bg-white pl-[5px] text-[11px] text-[#333] outline-none" /></div>
            <div className="ml-[38px] mr-[4px] mt-[8px] flex">
              <input aria-label="Dimension value" defaultValue="10.000mm" className="h-[22px] w-[114px] border border-[#c3c6cc] bg-white pl-[5px] text-[11px] text-[#333] outline-none" />
              <div className="flex flex-1 flex-col">
                <button type="button" aria-label="Increase" className="flex flex-1 items-center justify-center border border-[#d3d5d9] bg-[#eceef0]"><span className="rotate-180"><Arr /></span></button>
                <button type="button" aria-label="Decrease" className="flex flex-1 items-center justify-center border border-[#d3d5d9] bg-[#eceef0]"><Arr /></button>
              </div>
            </div>
            <div className="mb-[3px] ml-[41px] mt-[10px]"><Btn>Configurations...</Btn></div>
          </Group>
          <Group title="Dimension Text" c="pb-4">
            <div className="ml-[3px] mt-[3px] flex gap-[2px]"><Sq n="dimC" /><Sq n="dimL" /><div className="w-[16px]" /><Sq n="paren" /><Sq n="oval" /></div>
            <textarea aria-label="Dimension text" defaultValue="<MOD-DIAM><DIM>" className="mx-[3px] mt-[7px] block h-[66px] w-[170px] resize-none border border-[#b0b3b9] bg-white text-[9px] leading-[11px] text-black outline-none" />
            <div className="ml-[3px] mt-[4px] flex gap-[2px]"><Sq n="paren" /><Sq n="oval" /></div>
            <textarea aria-label="Lower text" className="mx-[3px] mt-[5px] block h-[40px] w-[170px] resize-none border border-[#b0b3b9] bg-white outline-none" />
          </Group>
        </div>
        <ScrollBar thumb="h-[324px]" />
      </div>
      <div className="h-[8px] shrink-0 border-b-2 border-[#888b94]" />
    </aside>
  );
}

/* ---------- drawing ---------- */
const Rel = ({ x, y, kind }) => (
  <g>
    <rect x={x - 6} y={y - 6} width="12" height="12" fill="#12b04c" />
    {kind === 'v' && <path d={`M${x} ${y - 4}v8`} stroke="#064d1e" strokeWidth="1.500" />}
    {kind === 'p' && <path d={`M${x} ${y - 4}v7M${x - 4} ${y + 3.5}h8`} stroke="#064d1e" strokeWidth="1.500" />}
    {kind === 'x' && <g><path d={`M${x - 5} ${y + 5}l10-10M${x - 5} ${y - 5}l10 10`} stroke="#0a6a2a" /><rect x={x - 1.5} y={y - 1.5} width="3" height="3" fill="#6fe6c0" /></g>}
    {kind === 'h' && <path d={`M${x - 5} ${y - 4}l9 9M${x - 1} ${y - 5}l6 6`} stroke="#067a2c" />}
  </g>
);
function Drawing() {
  return (
    <svg viewBox="264 124 836 641" className="absolute inset-0 h-full w-full" role="img" aria-label="Section sketch of the lower ports">
      <g fill="none" stroke="#000" strokeWidth="2">
        <path d="M439.500 419V316.500H554M764 316.500h74.500V419H963.500V555.500H314.500V419H439.500" />
        <path d="M554 316v-4h19v3M647 316v-4h20v3M694 316v-4h14v3" />
        <path d="M704.500 318V345h59V318M704.500 345l29 17 30-17" />
        <path d="M412.500 549V462l70-42 70 42V549M725.500 549V462l70-42 70 42V549" />
        <path d="M363 555v-6H602v6M676 555v-6H915v6" />
        <path d="M720 234L781 652M751 231L807 632" strokeWidth="1.700" />
      </g>
      <path d="M554 316.500H764" stroke="#77797e" strokeWidth="2" />
      <path d="M368 555.500h55M450 555.500h35M690 555.500h25M790 555.500h32M866 555.500h37" stroke="#85878b" strokeWidth="2" />
      <path d="M838 316.500H1034" stroke="#85878b" strokeDasharray="22 3 5 3" />
      <circle cx="1034" cy="316.500" r="2.500" fill="#6b6d72" />
      <g fill="none" stroke="#111" strokeDasharray="3 3">
        <path d="M440 418.500H838" /><path d="M412 462.500H552M725 462.500H865" strokeWidth="2" />
        <path d="M494.500 324V407M521.500 324V407M494.500 407l13 8 14-8M756.500 324V407M783.500 324V407M756.500 407l13 8 14-8" />
        <path d="M556 318V345M614 345V318M619 318V345M677 345V318M556 345l29 16 29-16M619 345l29 16 29-16" />
        <path d="M348 419V555M406 419V555M872 419V555M929 419V555" />
        <path d="M530 460l63-40 69 42" />
        <path d="M518.500 464V549M525 464V549M662 464V549" />
        <path d="M407 464V549M557.500 549V463H668V549M720 464V549M870.500 464V549" strokeWidth="1.800" />
        <path d="M800 549V485.500H875V549" strokeWidth="1.800" /><path d="M805 549V485M805 484l33-20 34 20" />
        <path d="M602 549.500H676" />
      </g>
      <path d="M556 345h58M619 345h58" stroke="#111" strokeWidth="1.500" strokeDasharray="6 2" />
      <path d="M494 324.500h28M494 407.500h28M756 324.500h28M756 407.500h28" stroke="#111" />
      <path d="M505 314l6 6M511 314l-6 6M767 314l6 6M773 314l-6 6M585 313v7M638 313l4 3.500-4 3.500" stroke="#777" fill="none" />
      <g fill="#b8babf"><circle cx="475" cy="555" r="2" /><circle cx="713" cy="555" r="2" /><circle cx="818" cy="555" r="2" /><circle cx="888" cy="555" r="2" /></g>
      <path d="M733.500 149V316" stroke="#222" strokeDasharray="14 3 3 3" />
      <g stroke="#111" fill="none"><path d="M690 178Q715 171 752 173M713 171l8 52" /></g>
      <path d="M713 173l-12 1 2 4zM735 172l11-2v4z" fill="#111" />
      <text x="690" y="173" fontSize="18" fontWeight="900" fontFamily="Lato" fill="#000">8°</text>
      <path d="M722 235L751 230" stroke="#1220c8" strokeWidth="2" strokeDasharray="6 3" />
      <path d="M781 652L807 632" stroke="#2a20b8" strokeWidth="2" />
      <g fill="#1210b4"><circle cx="734" cy="149" r="3" /><circle cx="721" cy="223.500" r="3" /><circle cx="751" cy="230.500" r="3" /><circle cx="781" cy="651.500" r="3" /><circle cx="782.500" cy="665.500" r="3" /></g>
      <circle cx="733.500" cy="316.500" r="3.500" fill="#111" />
      <text x="466" y="467" fill="#fff" opacity=".85" fontSize="50" fontWeight="300" fontFamily="'Noto Sans CJK SC', sans-serif">莫西网<tspan x="622" fontFamily="'Liberation Serif', serif" fontWeight="400">www.3dmox.com</tspan></text>
      <Rel x={720} y={233} kind="v" /><Rel x={736} y={234} kind="x" /><Rel x={764} y={230} kind="p" />
      <Rel x={734} y={302} kind="x" /><Rel x={720} y={316} kind="x" /><Rel x={748} y={316} kind="x" />
      <Rel x={791} y={416} kind="h" /><Rel x={766} y={442} kind="h" /><Rel x={795} y={651} kind="x" />
      <g fontFamily="Open Sans" fontSize="9" fill="#111"><text x="797" y="421">3</text><text x="771" y="448">3</text></g>
      <g stroke="#5b9fc8" fill="none"><path d="M734 657L870 638M751 645l2 11M807 636l2 12" /></g>
      <g stroke="#141a44" fill="#7f8fe0"><circle cx="742" cy="656.500" r="2.800" /><circle cx="818" cy="645.500" r="2.800" /><rect x="748" y="638.500" width="5.500" height="5.500" fill="#4a8ccc" /><rect x="804.500" y="630" width="5.500" height="6" /></g>
      <g stroke="#5fa3cc" strokeWidth="1.300" fill="none"><circle cx="836" cy="632" r="6" /><path d="M831 640l10-16" /></g>
      <text x="846" y="638" fontSize="18" fontFamily="Lato" fontWeight="700" fill="#5fa3cc" transform="rotate(-5 848 632)">10</text>
      <path d="M638.500 555V528M635.500 532l3-9 3 9zM638 555.500h12M648 553l8 2.500-8 2.500z" stroke="#e11111" fill="#e11111" />
      <path d="M306 706V684" stroke="#1d7a2a" strokeWidth="3" /><path d="M301.500 685l4.500-9 4.500 9z" fill="#14541c" />
      <path d="M306 706.500H284" stroke="#5a5ad8" strokeWidth="3" /><path d="M285 702l-9 4.500 9 4.500z" fill="#1a1a9a" />
      <circle cx="306" cy="706.500" r="4.500" fill="#c01824" />
      <g fontFamily="Open Sans" fontSize="10"><text x="302" y="674" fill="#555">Y</text><text x="268" y="711" fill="#1a1a7a">Z</text></g>
      <text x="277" y="760" fontSize="11" fontWeight="700" fontFamily="'DejaVu Sans'" fill="#000">*Right</text>
      <g opacity=".3" fill="none"><path d="M1010 158h-16v18l6 5h9" stroke="#4050d0" strokeWidth="2" /><path d="M998 172l3-5 14-7 2 3-13 8z" fill="#d8c040" stroke="#777" /><path d="M1017 170c10 4 9 12 1 16M1020 182l-4 5-6-4M1015 193l-5-9" stroke="#5048b8" strokeWidth="3" /></g>
      <path d="M1036 193l19 19M1055 193l-19 19" stroke="#dfa0a8" strokeWidth="4" opacity=".7" />
    </svg>
  );
}

const hud = ['tape', 'normalTo', 'zoomFit', 'zoomArea', 'prevView', '*section', 'annot', 'viewOri', '-', 'dispStyle', '-', 'glasses', '-', 'grayBall', 'scene', '-', 'monitor', '-'];
function Viewport() {
  return (
    <main className="relative min-w-0 flex-1">
      <Drawing />
      <div className="relative flex items-start pl-[3px]">
        <div className="flex h-[29px] w-[229px] shrink-0 items-center font-['Noto_Sans'] text-[11px]">
          <svg viewBox="0 0 14 10" className="h-[10px] w-[14px]" aria-hidden="true"><path d="M.5.500h9v9h-9zM2.500 5h5M5 2.500v5M10 5h4" fill="none" stroke="#333" /></svg>
          <Ic n="part" c="size-[17px]" /><span className="ml-[5px] whitespace-nowrap">NG10-Lower Ports &nbsp;(Default...</span>
        </div>
        <div className="flex h-[35px] items-center">
          {hud.map((n, i) => n === '-'
            ? <span key={i} className="flex w-[14px] justify-center"><svg viewBox="0 0 6 4" className="h-[3px] w-[4px]"><path d="M0 0h6L3 4z" fill="#777" /></svg></span>
            : n[0] === '*'
              ? <IconBtn key={i} n={n.slice(1)} box="h-[22px] border border-[#555] bg-[#97999e]" />
              : <IconBtn key={i} n={n} c="size-[17px]" />)}
        </div>
      </div>
      <div className="absolute right-0 top-[41px] flex w-[25px] flex-col border-l border-t border-black">
        {['home', 'library', 'folder', 'palette', 'ball2', 'props', 'forum'].map((n, i) => (
          <button key={n} type="button" aria-label={n} className={`flex h-6 items-center justify-center border-b border-black ${i ? 'bg-[#abacb0]' : 'bg-[#e8ebef]'}`}><Ic n={n} c="size-[17px]" /></button>
        ))}
      </div>
      <button type="button" aria-label="Collapse panel" className="absolute left-[-1px] top-[292px] flex h-[38px] w-[9px] flex-col items-center justify-center gap-[5px] border border-[#555] bg-[#e8eaed]">
        {[0, 1, 2].map((i) => <svg key={i} viewBox="0 0 4 4" className="size-[4px]"><path d="M4 0v4L0 2z" /></svg>)}
      </button>
    </main>
  );
}

/* ---------- task pane ---------- */
const resources = [
  ['Getting Started', 'pb-[1px]', [['doc', 'New Document'], ['open', 'Open a Document'], ['tutorials', 'Tutorials'], ['whatsNew', "What's New"], ['box', 'Introducing SOLIDWORKS'], ['info', 'General Information']]],
  ['SOLIDWORKS Tools', 'pb-[1px]', [['swTab', 'Property Tab Builder'], ['swRx', 'SOLIDWORKS Rx'], ['swRx', 'Performance Benchmark Test'], ['score', 'Compare My Score'], ['wizard', 'Copy Settings Wizard'], ['products', 'My Products']]],
  ['Community', 'pb-[3px]', [['portal', 'Customer Portal'], ['users', 'User Groups'], ['discuss', 'Discussion Forum'], ['rss', 'Technical Alerts & News']]],
  ['Online Resources', 'pb-[1px]', [['hands', 'Partner Solutions']]],
  ['Subscription Services', 'pb-[1px]', [['portal', 'Subscription Services']]],
];
function TaskPane() {
  return (
    <aside className="flex w-[312px] shrink-0 flex-col border-l-2 border-[#222] bg-[#e0e4e8]">
      <h2 className="flex h-[19px] shrink-0 items-center border-b border-black bg-[#abacb0] pl-[8px] pr-[5px] text-[12px] font-semibold"><span className="text-[15px] leading-none">«</span><span className="flex-1 text-center">SOLIDWORKS Resources</span><Ic n="pin" c="size-[14px]" /></h2>
      <div className="flex min-h-0 flex-1">
        <div className="flex min-w-0 flex-1 flex-col gap-[21px] overflow-hidden pl-[11px] pr-[12px] pt-[6px]">
          {resources.map(([t, pb, items]) => (
            <section key={t} className={`shrink-0 border border-black bg-[#d8dade] ${pb}`}>
              <h3 className="flex h-[23px] items-center justify-between border-b border-black bg-[#abacb0] px-[4px] pt-px font-semibold text-[#44464c]"><span>{t}</span><Chev color="#555" /></h3>
              <ul>{items.map(([n, l]) => <li key={l} className="h-[25px]"><a href="#" className="flex h-full items-center pl-[3px] text-[#0c0c30]"><span className="pb-[3px]"><Ic n={n} c="size-[16px]" /></span><span className="ml-[4px] mt-[2px]">{l}</span></a></li>)}</ul>
            </section>
          ))}
        </div>
        <ScrollBar thumb="h-[485px]" />
      </div>
    </aside>
  );
}

const selFilters = ['t1', '*t2', 't3', 't4', 't5', '*t6', 't7', 't8', '*t9', '*t10', 't11', 't12', 't13', 't14', 't15', 't16', 't17', 't18', 't19', 't20', 't21', 't22', 't23', 't24', 't25', 't26'];
const VDots = () => <div className="mx-[5px] my-[4px] w-[2px] border-l-2 border-dotted border-[#555]" />;

function SwCube() {
  return (
    <svg viewBox="0 0 36 36" className="size-[34px]" aria-hidden="true">
      <path d="M2 8L14 2l18 4v20L20 34 3 26z" fill="#c4201c" stroke="#6b0c0a" /><path d="M2 8l18 5L32 6 14 2z" fill="#ea5a4a" /><path d="M20 13v21l12-8V6z" fill="#8d1210" />
      <g fontFamily="Open Sans" fontWeight="800" fill="#fff" stroke="#5b0b09" strokeWidth=".5"><text x="3" y="25" fontSize="17">S</text><text x="14" y="25" fontSize="17">W</text><text x="8" y="34" fontSize="10">2015</text></g>
    </svg>
  );
}
const TB = ({ label, children, active }) => (
  <button type="button" aria-label={label} className={`mr-[3px] flex h-[38px] w-[59px] shrink-0 items-center justify-center rounded-[2px] ${active || ''}`}>{children}</button>
);
const openCls = 'border border-[#9cc4e2] bg-white/25';

export default function App() {
  return (
    <div className="flex h-screen flex-col overflow-hidden bg-[#d8dade] font-['Open_Sans',sans-serif] text-[11px] text-[#0e0e12]">
      <TitleBar />
      <Ribbon />
      <div className="flex min-h-0 flex-1">
        <div className="flex min-w-0 flex-1 flex-col bg-[radial-gradient(ellipse_55%_75%_at_24%_12%,#ffffff_35%,#ffffff00_100%),linear-gradient(180deg,#f6f7fa_0%,#e6e9f0_22%,#d9dce7_42%,#e2e4ec_55%,#ffffff_70%,#fbfbfc_100%)]">
          <div className="flex h-[19px] shrink-0">
            {cmdTabs.map(([t, w], i) => (
              <button key={t} type="button" className={`${w} shrink-0 whitespace-nowrap border-b border-r border-black text-center ${i === 1 ? 'border-b-transparent bg-[#e4e7ea] text-[12px] font-bold' : 'bg-[#abacb0]'}`}>{t}</button>
            ))}
            <div className="ml-auto flex items-end pr-[6px]">
              {['winL', 'winR', 'min', 'restore', 'close'].map((n) => <IconBtn key={n} n={n} c="size-[15px]" box="h-[10px]" />)}
            </div>
          </div>
          <div className="flex min-h-0 flex-1">
            <div className="flex w-[60px] shrink-0 bg-[#d8dade] pt-[6px]"><Strip items={strip1} c="w-[29px]" /><Strip items={strip2} c="w-[31px]" /></div>
            <PropertyPanel />
            <Viewport />
          </div>
          <div className="flex h-[15px] shrink-0 border-t border-black bg-[#dfe2e6] leading-[12px]">
            <div className="w-[60px] bg-[#d8dade]" />
            <div className="flex w-[67px] shrink-0 gap-px bg-[#d8dade]">{['|◂', '◂', '▸', '▸|'].map((s) => <button key={s} type="button" className="w-4 bg-[#abacb0] text-[9px] text-[#85878b]">{s}</button>)}</div>
            <button type="button" className="w-[57px] border border-t-0 border-black bg-[#e4e7ea] text-[12px] font-bold">Model</button>
            <button type="button" className="w-[67px] border-b border-r border-black bg-[#abacb0]">3D Views</button>
            <button type="button" className="w-[105px] border-b border-r border-black bg-[#abacb0] pr-[8px]">Motion Study 1</button>
          </div>
        </div>
        <TaskPane />
        <div className="flex w-[28px] shrink-0 flex-col pt-[3px]">
          <Strip c="w-full" items={['gCurve1', 'gCurve2', 'gCurve3', 'gCurve4', 'corner', '-', 'gCurve2', 'gCurve5', 'gArch', 'gArch']} />
        </div>
      </div>
      <div className="flex h-[28px] shrink-0 self-start border-r border-t border-white pr-[8px]">
        <VDots />
        {['gSheets', 'gLayers', 'gBucket', 'gBars', 'gDashes', 'gSwap', 'baseline'].map((n) => <IconBtn key={n} n={n} c="size-[17px]" />)}
      </div>
      <div className="flex h-[33px] shrink-0 border-t border-white pb-px shadow-[0_-1px_0_#a8aab0]">
        <div className="flex items-center self-stretch border-r border-white pr-[6px]">
          <div className="flex self-stretch"><VDots /></div>
          <IconBtn n="fG" /><IconBtn n="fG3" /><IconBtn n="fB3" />
          <button type="button" aria-label="Select" className="ml-[2px] flex h-[22px] items-center border border-[#555] bg-[#e3e5e8]"><span className="flex h-full w-[23px] items-center justify-center bg-[#a9abaf]"><Ic n="cursor" /></span><span className="px-[3px]"><Arr c="w-[4px]" /></span></button>
          <IconBtn n="cursors" c="size-[18px]" /><div className="mx-[3px] h-[18px] w-px bg-[#666]" />
          <div className="w-[2px]" />
          {selFilters.map((n) => n[0] === '*'
            ? <IconBtn key={n} n={n.slice(1)} box="h-[22px] border border-[#444] bg-[#a9abaf]" />
            : <IconBtn key={n} n={n} />)}
        </div>
      </div>
      <footer className="flex h-[20px] shrink-0 items-center border-y border-black bg-[#dadce0] pl-[2px] pr-[6px] text-[11px] text-black">
        <span className="flex-1">SOLIDWORKS Premium 2015 x64 Edition</span>
        <span className="w-[77px]">-12.61mm</span><span className="w-[64px]">55.78mm</span><span className="w-[50px]">0mm</span>
        <span className="w-[94px]">Under Defined</span><span className="w-[140px]">Editing Sketch92</span><span className="w-[54px]">MMGS</span>
        <span className="w-[22px] rotate-180"><span className="flex justify-end"><Arr /></span></span><span className="w-[72px]"><Ic n="statusHelp" c="size-[14px]" /></span><Ic n="tag" />
      </footer>
      <div className="flex h-[39px] shrink-0 items-center bg-[linear-gradient(180deg,#0b2e52aa_0%,#ffffff22_12%,#ffffff00_40%,#00204033_100%),linear-gradient(90deg,#2b6c9b_0%,#3b8cc6_12%,#2f86c4_35%,#1f6eb8_55%,#2573ba_68%,#173f7c_76%,#14335f_100%)] text-white">
        <button type="button" aria-label="Start" className="flex w-[56px] shrink-0 justify-center">
          <svg viewBox="0 0 38 38" className="size-[37px]"><circle cx="19" cy="19" r="17.500" fill="#24597f" stroke="#8fc3e2" strokeWidth="1.500" /><ellipse cx="19" cy="12" rx="14" ry="9" fill="#9cc8e0" opacity=".5" /><path d="M9 10c3-2 7-2 9.500 0l-1 8c-3-2-6-2-9.500 0z" fill="#e8622a" /><path d="M20 11c3 2 6 2 10 0l-2 8c-3 2-6 2-9 0z" fill="#86c440" /><path d="M7.500 20c3-2 7-2 9.500 0l-1 8c-3-2-6-2-9.500 0z" fill="#3fa2e0" /><path d="M18.500 21c3 2 6 2 9.500 0l-2 8c-3 2-6 2-9 0z" fill="#f8cc34" /></svg>
        </button>
        <div className="w-[4px] shrink-0" />
        <TB label="Explorer" active={openCls}><svg viewBox="0 0 34 34" className="size-[34px]"><path d="M2 5h12l2 3h14v20H2z" fill="#e9c667" stroke="#b48a2a" /><path d="M5 8h24v5H5z" fill="#fff" /><path d="M2 12h28v17H2z" fill="#f9e9a6" stroke="#c9a548" /><path d="M8 31v-8h18v8h-5v-4h-8v4z" fill="#9fd0ee" stroke="#4a8cb8" /></svg></TB>
        <TB label="Internet Explorer"><svg viewBox="0 0 34 34" className="size-[34px]"><path d="M9 19h18c1-15-19-15-19-1 0 12 15 13 18 4" fill="none" stroke="#7accf5" strokeWidth="5" /><path d="M5 32C-2 24 16 3 29 3c4 0 3 4 0 7 1-7-12-2-18 8-4 6-5 10-5 13z" fill="#f2d05a" /></svg></TB>
        <TB label="Media Player"><svg viewBox="0 0 28 28" className="size-[26px]"><path d="M16 2h4v24h-4zM21 3h3v22h-3z" fill="#b6def2" opacity=".8" /><rect x="3" y="2" width="16" height="24" fill="#dff0fa" /><circle cx="12" cy="14" r="9" fill="#ef7f1a" stroke="#fff" /><path d="M9.500 9.500v9l7-4.500z" fill="#fff" /></svg></TB>
        <TB label="ICS"><span className="flex h-[33px] w-[34px] items-end justify-center bg-white text-[20px] font-bold italic leading-[25px] text-[#1a1f5e]"><span className="text-[#333]">i</span><span className="text-[#777]">c</span>s</span></TB>
        <TB label="SOLIDWORKS"><SwCube /></TB>
        <TB label="SOLIDWORKS 2015" active="border border-white bg-white/70"><SwCube /></TB>
        <TB label="AutoCAD" active={openCls}><svg viewBox="0 0 34 34" className="size-[33px]"><rect width="34" height="34" fill="#ec6a66" /><rect width="34" height="14" fill="#f6b6b2" opacity=".5" /><path d="M17 4l9 24h-6l-1-4h-6l-4 5H7z" fill="#b01818" /><path d="M17 4L7 29l10-8z" fill="#7d0f0f" /></svg></TB>
        <div className="h-full min-w-0 flex-1">
          <svg viewBox="0 0 614 39" preserveAspectRatio="xMaxYMid slice" className="h-full w-full" aria-hidden="true"><path d="M544 0q22 12 40 39" fill="none" stroke="#9fd3f2" strokeWidth="8" opacity=".25" /><path d="M546 0q22 12 38 39" fill="none" stroke="#d8f0ff" strokeWidth="3" opacity=".7" /></svg>
        </div>
        <span className="mb-[6px] mr-[11px]">EN</span>
        {['trayClock', 'trayA', 'trayPdf', 'trayPrn', 'shield', 'horn', 'flag', 'speaker', 'net'].map((n) => <IconBtn key={n} n={n} w="w-[24px]" c="size-[15px]" />)}
        <time className="w-[76px] shrink-0 text-center leading-[17px]">10:08 AM<br />3/14/2019</time>
        <button type="button" aria-label="Show desktop" className="h-full w-[13px] border-l border-[#8aa4c4] bg-white/15" />
      </div>
    </div>
  );
}
